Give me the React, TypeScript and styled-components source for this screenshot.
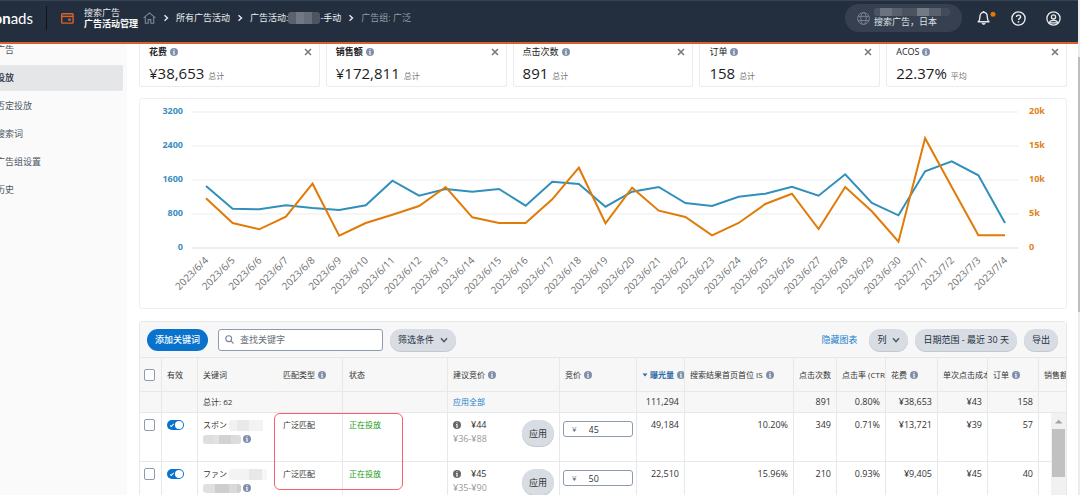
import React from "react";
import styled, { createGlobalStyle, css } from "styled-components";

const GlobalStyle = createGlobalStyle`
  *, *::before, *::after { box-sizing: border-box; }
  html, body { margin: 0; background: #fff; overflow: hidden; }
  body, button, input {
    font-family: "Open Sans", "Noto Sans CJK SC", "Noto Sans CJK JP", sans-serif;
    font-size: 9px;
    color: #333;
  }
  button { border: 0; padding: 0; background: none; cursor: pointer; white-space: nowrap; }
  a { text-decoration: none; color: inherit; }
  svg { display: block; flex: none; }
`;

/* ---------- page frame ---------- */

const Shell = styled.div`
  display: flex;
  height: 100vh;
  overflow: hidden;
`;

const Page = styled.div`
  flex: 1;
  min-width: 0;
  display: flex;
  flex-direction: column;
`;

const PageScroll = styled.div`
  width: 2px;
  padding-top: 57px;
  background: #ececec;
`;

const PageThumb = styled.div`
  height: 255px;
  background: #bdbdbd;
`;

const Columns = styled.div`
  flex: 1;
  display: flex;
  min-height: 0;
`;

/* ---------- header ---------- */

const Header = styled.header`
  position: relative;
  z-index: 1;
  display: flex;
  align-items: flex-start;
  height: 44px;
  background: #232f3e;
  border-top: 1px solid #364352;
  border-bottom: 2px solid #d8602c;
  color: #fff;
`;

const HeaderGroup = styled.div`
  display: flex;
  align-items: center;
  height: 34px;
`;

const Logo = styled.a`
  display: flex;
  justify-content: flex-end;
  width: 33px;
  font: 15px/20px Lato, "Open Sans", sans-serif;
  b { font-weight: 700; }
`;

const Divider = styled.span`
  width: 1px;
  height: 24px;
  margin: 0 14px 0 13px;
  background: #0d131b;
`;

const Product = styled.div`
  display: flex;
  flex-direction: column;
  margin-left: 10px;
  line-height: 11px;
  white-space: nowrap;
  color: #e6e8eb;
  strong { color: #fff; }
`;

const Crumbs = styled.nav`
  display: flex;
  align-items: center;
  gap: 7px;
  margin-left: 5px;
  line-height: 12px;
  white-space: nowrap;
`;

const Crumb = styled.a`
  display: flex;
  align-items: center;
  color: #eef0f2;
`;

const CurrentCrumb = styled.span`
  color: #939ca8;
`;

const HeaderTools = styled(HeaderGroup)`
  margin-left: auto;
  padding-right: 17px;
`;

const AccountPill = styled.button`
  display: flex;
  align-items: center;
  gap: 4px;
  height: 28px;
  width: 117px;
  padding-left: 12px;
  margin-right: 15px;
  border-radius: 14px;
  background: #364050;
  color: #dfe2e6;
`;

const AccountText = styled.span`
  display: flex;
  flex-direction: column;
  line-height: 12px;
  text-align: left;
`;

const IconButton = styled.button<{ $gap?: number }>`
  margin-right: ${(p) => p.$gap ?? 0}px;
`;

/* ---------- side navigation ---------- */

const Side = styled.nav`
  width: 127px;
  flex: none;
  background: #fafafa;
`;

const SideList = styled.ul`
  list-style: none;
  display: flex;
  flex-direction: column;
  gap: 2px;
  margin: -7px 4px 0 0;
  padding: 0;
`;

const SideLink = styled.a<{ $active?: boolean }>`
  display: block;
  height: 26px;
  line-height: 26px;
  text-indent: -4px;
  border-radius: 0 2px 2px 0;
  color: ${(p) => (p.$active ? "#232f3e" : "#4b5563")};
  font-weight: ${(p) => (p.$active ? 500 : 400)};
  background: ${(p) => (p.$active ? "#e4e6e8" : "transparent")};
`;

/* ---------- metrics ---------- */

const Main = styled.main`
  flex: 1;
  min-width: 0;
  padding: 0 11px 0 12px;
`;

const Metrics = styled.section`
  display: grid;
  grid-template-columns: repeat(5, 1fr);
  gap: 6px;
`;

const Metric = styled.article`
  display: flex;
  flex-direction: column;
  gap: 5px;
  padding: 2px 7px 3px 9px;
  border: 1px solid #ececee;
  border-top: 0;
  border-radius: 0 0 3px 3px;
`;

const MetricTitle = styled.div<{ $strong?: boolean }>`
  display: flex;
  align-items: center;
  gap: 3px;
  height: 12px;
  line-height: 12px;
  font-weight: ${(p) => (p.$strong ? 700 : 400)};
  color: #222;
  button { margin-left: auto; }
`;

const MetricValue = styled.div`
  display: flex;
  align-items: baseline;
  gap: 4px;
  font-size: 15px;
  line-height: 20px;
  height: 20px;
  color: #1c1c1c;
  small { font-size: 8px; color: #767676; }
`;

const ChartCard = styled.section`
  margin-top: 11px;
  border: 1px solid #efeff0;
  border-radius: 3px;
  svg { width: 100%; height: auto; }
`;

/* ---------- keyword table ---------- */

const Panel = styled.section`
  margin-top: 12px;
  border: 1px solid #e8e8e9;
  border-radius: 3px 3px 0 0;
`;

const Toolbar = styled.div`
  display: flex;
  align-items: center;
  height: 36px;
  padding: 0 8px 0 7px;
  background: #f7f7f7;
  border-bottom: 1px solid #e8e8e9;
`;

const ToolGroup = styled.div<{ $end?: boolean }>`
  display: flex;
  align-items: center;
  gap: 7px;
  margin-left: ${(p) => (p.$end ? "auto" : "0")};
`;

const Pill = styled.button<{ $primary?: boolean }>`
  display: flex;
  align-items: center;
  gap: 6px;
  height: 22px;
  padding: 0 8px;
  border-radius: 11px;
  color: #232f3e;
  background: #d8dde4;
  box-shadow: 0 1px 0 #c3c8d0;
  ${(p) =>
    p.$primary &&
    css`
      color: #fff;
      background: #0972cc;
      box-shadow: none;
      font-weight: 500;
      margin-right: 3px;
    `}
`;

const SearchBox = styled.label`
  display: flex;
  align-items: center;
  gap: 6px;
  width: 165px;
  height: 22px;
  padding: 0 6px;
  border: 1px solid #8c9bb0;
  border-radius: 3px;
  background: #fff;
  input {
    flex: 1;
    min-width: 0;
    border: 0;
    padding: 0;
    outline: 0;
    background: none;
  }
  input::placeholder { color: #666f7c; opacity: 1; }
`;

const TextLink = styled.a`
  color: #1a80cc;
  margin-right: 5px;
`;

const TableFrame = styled.div`
  position: relative;
`;

const Table = styled.table`
  width: 100%;
  table-layout: fixed;
  border-collapse: separate;
  border-spacing: 0;
  font-size: 8px;
  line-height: 14px;
`;

const cell = css<{ $num?: boolean; $open?: boolean; $pad?: string }>`
  padding: ${(p) => p.$pad ?? "0 5px"};
  border-right: 1px solid ${(p) => (p.$open ? "transparent" : "#e8e8e9")};
  border-bottom: 1px solid #e8e8e9;
  text-align: ${(p) => (p.$num ? "right" : "left")};
  font-size: ${(p) => (p.$num ? 9 : 8)}px;
  white-space: nowrap;
  overflow: hidden;
  &:last-child { border-right: 0; }
`;

const Th = styled.th`
  ${cell}
  height: 34px;
  padding-right: 0;
  background: #f7f7f7;
  font-weight: 400;
`;

const ThLabel = styled.span`
  display: flex;
  align-items: center;
  gap: 3px;
`;

const SortButton = styled.button`
  display: flex;
  align-items: center;
  gap: 2px;
  font-size: 8px;
  font-weight: 700;
  color: #2f6ba8;
`;

const TotalCell = styled.td`
  ${cell}
  height: 21px;
  background: #f7f7f7;
`;

const Td = styled.td`
  ${cell}
  height: 49px;
  padding-top: 5px;
  vertical-align: top;
`;

const TickBox = styled.input`
  appearance: none;
  display: block;
  width: 11px;
  height: 12px;
  margin: 1px 0 0;
  border: 1px solid #8c9bb0;
  border-radius: 2px;
  background: #fff;
`;

const Switch = styled.input`
  appearance: none;
  display: flex;
  align-items: center;
  justify-content: space-between;
  width: 17px;
  height: 10px;
  margin: 2px 0 0;
  padding: 0 1px 0 3px;
  border-radius: 5px;
  background: #0972cc;
  &::before {
    content: "";
    width: 4px;
    height: 2px;
    border: solid #fff;
    border-width: 0 0 1px 1px;
    transform: rotate(-45deg);
  }
  &::after {
    content: "";
    width: 8px;
    height: 8px;
    border-radius: 50%;
    background: #fff;
  }
`;

const Line = styled.div`
  display: flex;
  align-items: center;
  height: 14px;
  gap: 2px;
`;

const Status = styled.span`
  color: #129a12;
`;

const Suggest = styled.div`
  display: flex;
  justify-content: space-between;
  align-items: flex-start;
  font-size: 9px;
`;

const SuggestBid = styled(Line)`
  gap: 10px;
`;

const Range = styled.div`
  color: #999;
`;

const ApplyButton = styled.button`
  width: 32px;
  height: 26px;
  margin-top: 2px;
  border-radius: 13px;
  background: #d8dde4;
  box-shadow: 0 1px 0 #c3c8d0;
`;

const BidBox = styled.label`
  display: flex;
  align-items: center;
  gap: 12px;
  height: 16px;
  margin-top: 3px;
  padding: 0 8px;
  border: 1px solid #8c9bb0;
  border-radius: 3px;
  color: #4f5866;
  input {
    flex: 1;
    min-width: 0;
    height: 14px;
    padding: 0;
    border: 0;
    outline: 0;
    background: none;
  }
`;

const TableScroll = styled.div`
  position: absolute;
  top: 55px;
  right: 0;
  bottom: 0;
  width: 15px;
  display: flex;
  flex-direction: column;
  align-items: center;
  background: #f1f1f1;
`;

const ScrollThumb = styled.div`
  width: 13px;
  height: 48px;
  background: #c1c1c1;
`;

const Highlight = styled.div`
  position: absolute;
  top: 55px;
  left: 134px;
  width: 129px;
  height: 77px;
  border: 1px solid #f9606a;
  border-radius: 6px;
  pointer-events: none;
`;

/* ---------- icons ---------- */

const Info = ({ color = "#8090ab" }: { color?: string }) => (
  <svg width="8" height="8" viewBox="0 0 8 8" aria-hidden="true">
    <circle cx="4" cy="4" r="4" fill={color} />
    <path d="M3.500 1.200h1v1h-1zM3 3h1.500v2.700H5v.8H3v-.8h.5V3.800H3z" fill="#fff" />
  </svg>
);

const Chevron = ({ dir = "right", color = "#e8eaed" }: { dir?: "right" | "down"; color?: string }) => (
  <svg width={dir === "right" ? 6 : 8} height="8" viewBox={dir === "right" ? "0 0 6 8" : "0 0 8 8"} aria-hidden="true">
    <path d={dir === "right" ? "M1.5 1.2 4.5 4 1.5 6.8" : "M1 2.2 4 5.6 7 2.2"} fill="none" stroke={color} strokeWidth="1.4" />
  </svg>
);

const Close = () => (
  <svg width="8" height="8" viewBox="0 0 8 8" aria-hidden="true">
    <path d="M1 1 7 7M7 1 1 7" stroke="#777" strokeWidth="1.5" />
  </svg>
);

const CampaignIcon = () => (
  <svg width="13" height="11" viewBox="0 0 13 11" aria-hidden="true">
    <rect x="0.7" y="0.7" width="11.4" height="9.4" rx="0.8" fill="none" stroke="#d9622b" strokeWidth="1.4" />
    <path d="M0.7 3.4h11.4" stroke="#d9622b" strokeWidth="1.5" />
    <rect x="7.2" y="5.6" width="2.6" height="2.2" fill="#d9622b" />
  </svg>
);

const HomeIcon = () => (
  <svg width="13" height="12" viewBox="0 0 13 12" fill="none" stroke="#7d8794" strokeWidth="1.1" aria-hidden="true">
    <path d="M0.6 5.8 6.5 0.9l5.9 4.9M2.3 4.8v6.5h2.9V7.6h2.6v3.7h2.9V4.8" />
  </svg>
);

const GlobeIcon = () => (
  <svg width="13" height="13" viewBox="0 0 13 13" fill="none" stroke="#778190" aria-hidden="true">
    <circle cx="6.5" cy="6.5" r="5.9" />
    <ellipse cx="6.5" cy="6.5" rx="2.7" ry="5.9" />
    <path d="M1 4.4h11M1 8.6h11" />
  </svg>
);

const BellIcon = () => (
  <svg width="20" height="16" viewBox="0 0 20 16" fill="none" stroke="#e8eaed" aria-hidden="true">
    <path d="M1.2 11.8c1.5-1.3 1.7-2.7 1.7-4.9 0-2.8 1.4-4.5 3.7-4.5s3.7 1.7 3.7 4.5c0 2.2.2 3.6 1.7 4.9z" strokeWidth="1.4" strokeLinejoin="round" />
    <path d="M6.6 2.4V1" strokeWidth="1.6" />
    <path d="M4.9 13.2c.3 1.7 3.1 1.7 3.4 0z" fill="#e8eaed" strokeWidth=".6" />
    <circle cx="16" cy="4.3" r="2.5" fill="#e77600" stroke="none" />
  </svg>
);

const HelpIcon = () => (
  <svg width="15" height="15" viewBox="0 0 15 15" fill="none" stroke="#e8eaed" aria-hidden="true">
    <circle cx="7.5" cy="7.5" r="6.6" strokeWidth="1.4" />
    <path d="M5.5 6c0-2.6 4.1-2.5 4.1 0 0 1.4-2 1.4-2 2.9" strokeWidth="1.4" />
    <circle cx="7.5" cy="10.8" r=".9" fill="#e8eaed" stroke="none" />
  </svg>
);

const UserIcon = () => (
  <svg width="15" height="15" viewBox="0 0 15 15" fill="none" stroke="#e8eaed" strokeWidth="1.3" aria-hidden="true">
    <circle cx="7.5" cy="7.5" r="6.6" />
    <circle cx="7.5" cy="5.9" r="2.1" />
    <path d="M3.4 11.8c.3-3.3 7.9-3.3 8.2 0z" />
  </svg>
);

const SearchIcon = () => (
  <svg width="9" height="9" viewBox="0 0 9 9" fill="none" stroke="#7a8494" strokeWidth="1.1" aria-hidden="true">
    <circle cx="3.7" cy="3.7" r="2.9" />
    <path d="M5.9 5.9 8.5 8.5" />
  </svg>
);

const SortArrow = () => (
  <svg width="6" height="4" viewBox="0 0 6 4" aria-hidden="true">
    <path d="M0.5 0.5h5L3 3.5z" fill="#2f6ba8" />
  </svg>
);

const ScrollArrow = () => (
  <svg width="15" height="16" viewBox="0 0 15 16" aria-hidden="true">
    <path d="M4 10.5h7.5L7.7 6.8z" fill="#a3a3a3" />
  </svg>
);

/* Redacted names, drawn as strips of flat blocks. */
const Redaction = ({ width, height, blocks }: { width: number; height: number; blocks: [number, string][] }) => {
  const id = React.useId();
  let x = 0;
  return (
    <svg width={width} height={height} viewBox={`0 0 ${width} ${height}`} aria-hidden="true">
      <clipPath id={id}>
        <rect width={width} height={height} rx="3" />
      </clipPath>
      <g clipPath={`url(#${id})`}>
        {blocks.map(([w, fill], i) => {
          const rect = <rect key={i} x={x} width={w} height={height} fill={fill} />;
          x += w;
          return rect;
        })}
      </g>
    </svg>
  );
};

/* ---------- chart ---------- */

const DATES = [
  ...Array.from({ length: 27 }, (_, i) => `2023/6/${i + 4}`),
  ...Array.from({ length: 4 }, (_, i) => `2023/7/${i + 1}`),
];

const SPEND = [
  1459, 925, 911, 1005, 941, 894, 1005, 1584, 1231, 1388, 1325, 1388, 995, 1560, 1506, 972, 1325, 1435, 1059, 988,
  1207, 1278, 1442, 1231, 1734, 1059, 769, 1805, 2040, 1711, 588,
];

const SALES = [
  7309, 3676, 2750, 4603, 9456, 1809, 3676, 4897, 6177, 8971, 4515, 3676, 3676, 7162, 11809, 3632, 8868, 5485, 4559,
  1868, 3676, 6471, 7985, 2794, 8971, 5397, 926, 16132, 8971, 1868, 1868,
];

const PLOT = { left: 52, right: 878, top: 13, bottom: 149, first: 66, last: 865 };

const px = (i: number) => PLOT.first + ((PLOT.last - PLOT.first) * i) / (DATES.length - 1);
const py = (v: number, max: number) => PLOT.bottom - ((PLOT.bottom - PLOT.top) * v) / max;
const line = (data: number[], max: number) => data.map((v, i) => `${px(i)},${py(v, max)}`).join(" ");

const ChartText = styled.text<{ $tone: string; $bold?: boolean }>`
  fill: ${(p) => p.$tone};
  font-size: ${(p) => (p.$bold ? 9 : 10)}px;
  font-weight: ${(p) => (p.$bold ? 700 : 400)};
`;

const Chart = () => (
  <svg viewBox="0 0 926 209" role="img" aria-label="花费与销售额趋势">
    {[0, 1, 2, 3, 4].map((n) => {
      const y = PLOT.top + 34 * n;
      return (
        <g key={n}>
          <line x1={PLOT.left} x2={PLOT.right} y1={y} y2={y} stroke={n === 4 ? "#d5dbe3" : "#ededee"} />
          <ChartText x="43" y={y + 2} textAnchor="end" $tone="#3a8fbd" $bold>
            {3200 - 800 * n}
          </ChartText>
          <ChartText x="889" y={y + 2} $tone="#e08218" $bold>
            {n === 4 ? "0" : `${20 - 5 * n}k`}
          </ChartText>
        </g>
      );
    })}
    <polyline points={line(SPEND, 3200)} fill="none" stroke="#318fbc" strokeWidth="2" />
    <polyline points={line(SALES, 20000)} fill="none" stroke="#e07b08" strokeWidth="2" />
    {DATES.map((d, i) => (
      <ChartText key={d} transform={`translate(${px(i) + 3} 162) rotate(-45)`} textAnchor="end" $tone="#6f6f6f">
        {d}
      </ChartText>
    ))}
  </svg>
);

/* ---------- data ---------- */

const NAV = ["广告", "投放", "否定投放", "搜索词", "广告组设置", "历史"];

const METRICS = [
  { title: "花费", value: "¥38,653", note: "总计", strong: true },
  { title: "销售额", value: "¥172,811", note: "总计", strong: true },
  { title: "点击次数", value: "891", note: "总计" },
  { title: "订单", value: "158", note: "总计" },
  { title: "ACOS", value: "22.37%", note: "平均" },
];

const COLUMN_WIDTHS = [22, 36, 80, 65, 105, 112, 77, 48, 109, 43, 49, 52, 50, 51];

const TOTALS = ["111,294", "", "891", "0.80%", "¥38,653", "¥43", "158"];

const ROWS = [
  {
    keyword: "スポン",
    bid: "¥44",
    range: "¥36-¥88",
    value: "45",
    figures: ["49,184", "10.20%", "349", "0.71%", "¥13,721", "¥39", "57"],
    nameBlocks: [[8, "#f1f1f1"], [12, "#e9e9e9"], [14, "#f3f3f3"]] as [number, string][],
    lineBlocks: [[10, "#dedede"], [6, "#e2e2e2"], [12, "#d2d2d2"], [10, "#dcdcdc"]] as [number, string][],
  },
  {
    keyword: "ファン",
    bid: "¥45",
    range: "¥35-¥90",
    value: "50",
    figures: ["22,510", "15.96%", "210", "0.93%", "¥9,405", "¥45", "40"],
    nameBlocks: [[20, "#f3f3f3"], [13, "#e8e8e8"], [7, "#f6f6f6"]] as [number, string][],
    lineBlocks: [[12, "#e0e0e0"], [14, "#cecece"], [8, "#d9d9d9"], [4, "#cfcfcf"]] as [number, string][],
  },
];

/* ---------- page ---------- */

export default function App() {
  return (
    <>
      <GlobalStyle />
      <Shell>
        <Page>
          <Header>
            <HeaderGroup>
              <Logo href="#">
                <b>on</b>ads
              </Logo>
              <Divider />
              <CampaignIcon />
              <Product>
                <span>搜索广告</span>
                <strong>广告活动管理</strong>
              </Product>
              <Crumbs aria-label="导航路径">
                <Crumb href="#" aria-label="主页">
                  <HomeIcon />
                </Crumb>
                <Chevron />
                <Crumb href="#">所有广告活动</Crumb>
                <Chevron />
                <Crumb href="#">
                  广告活动:
                  <Redaction width={32} height={12} blocks={[[8, "#59626e"], [8, "#727983"], [8, "#666e79"], [8, "#4c5561"]]} />
                  -手动
                </Crumb>
                <Chevron />
                <CurrentCrumb>广告组: 广泛</CurrentCrumb>
              </Crumbs>
            </HeaderGroup>
            <HeaderTools>
              <AccountPill>
                <GlobeIcon />
                <AccountText>
                  <Redaction
                    width={76}
                    height={8}
                    blocks={[[6, "#4a5361"], [12, "#6b737e"], [10, "#58616d"], [15, "#4a5361"], [12, "#727a84"], [12, "#59616d"], [9, "#424b5a"]]}
                  />
                  <span>搜索广告，日本</span>
                </AccountText>
              </AccountPill>
              <IconButton $gap={14} aria-label="通知">
                <BellIcon />
              </IconButton>
              <IconButton $gap={20} aria-label="帮助">
                <HelpIcon />
              </IconButton>
              <IconButton aria-label="账户">
                <UserIcon />
              </IconButton>
            </HeaderTools>
          </Header>

          <Columns>
            <Side>
              <SideList>
                {NAV.map((item) => (
                  <li key={item}>
                    <SideLink href="#" $active={item === "投放"}>
                      {item}
                    </SideLink>
                  </li>
                ))}
              </SideList>
            </Side>

            <Main>
              <Metrics>
                {METRICS.map((m) => (
                  <Metric key={m.title}>
                    <MetricTitle $strong={m.strong}>
                      {m.title}
                      <Info />
                      <button aria-label={`移除${m.title}`}>
                        <Close />
                      </button>
                    </MetricTitle>
                    <MetricValue>
                      {m.value}
                      <small>{m.note}</small>
                    </MetricValue>
                  </Metric>
                ))}
              </Metrics>

              <ChartCard>
                <Chart />
              </ChartCard>

              <Panel>
                <Toolbar>
                  <ToolGroup>
                    <Pill $primary>添加关键词</Pill>
                    <SearchBox>
                      <SearchIcon />
                      <input type="search" placeholder="查找关键字" aria-label="查找关键字" />
                    </SearchBox>
                    <Pill>
                      筛选条件 <Chevron dir="down" color="#4a5565" />
                    </Pill>
                  </ToolGroup>
                  <ToolGroup $end>
                    <TextLink href="#">隐藏图表</TextLink>
                    <Pill>
                      列 <Chevron dir="down" color="#4a5565" />
                    </Pill>
                    <Pill>日期范围 - 最近 30 天</Pill>
                    <Pill>导出</Pill>
                  </ToolGroup>
                </Toolbar>

                <TableFrame>
                  <Table>
                    <colgroup>
                      {COLUMN_WIDTHS.map((w, i) => (
                        <col key={i} width={w} />
                      ))}
                      <col />
                    </colgroup>
                    <thead>
                      <tr>
                        <Th $pad="0 0 0 4px">
                          <TickBox type="checkbox" aria-label="全选" />
                        </Th>
                        <Th>有效</Th>
                        <Th $open>关键词</Th>
                        <Th>
                          <ThLabel>匹配类型 <Info /></ThLabel>
                        </Th>
                        <Th $pad="0 0 0 6px">状态</Th>
                        <Th>
                          <ThLabel>建议竞价 <Info /></ThLabel>
                        </Th>
                        <Th>
                          <ThLabel>竞价 <Info /></ThLabel>
                        </Th>
                        <Th>
                          <ThLabel>
                            <SortButton><SortArrow />曝光量</SortButton> <Info />
                          </ThLabel>
                        </Th>
                        <Th>
                          <ThLabel>搜索结果首页首位 IS <Info /></ThLabel>
                        </Th>
                        <Th>点击次数</Th>
                        <Th>点击率 (CTR)</Th>
                        <Th>
                          <ThLabel>花费 <Info /></ThLabel>
                        </Th>
                        <Th>单次点击成本</Th>
                        <Th>
                          <ThLabel>订单 <Info /></ThLabel>
                        </Th>
                        <Th>销售额</Th>
                      </tr>
                    </thead>
                    <tbody>
                      <tr>
                        <TotalCell />
                        <TotalCell />
                        <TotalCell $open>总计: 62</TotalCell>
                        <TotalCell />
                        <TotalCell />
                        <TotalCell>
                          <TextLink href="#">应用全部</TextLink>
                        </TotalCell>
                        <TotalCell />
                        {TOTALS.map((t, i) => (
                          <TotalCell key={i} $num>
                            {t}
                          </TotalCell>
                        ))}
                        <TotalCell />
                      </tr>
                      {ROWS.map((r) => (
                        <tr key={r.keyword}>
                          <Td $pad="0 0 0 4px">
                            <TickBox type="checkbox" aria-label={`选择 ${r.keyword}`} />
                          </Td>
                          <Td>
                            <Switch type="checkbox" role="switch" defaultChecked aria-label={`启用 ${r.keyword}`} />
                          </Td>
                          <Td $open>
                            <Line>
                              {r.keyword}
                              <Redaction width={38} height={11} blocks={r.nameBlocks} />
                            </Line>
                            <Line>
                              <Redaction width={38} height={9} blocks={r.lineBlocks} />
                              <Info />
                            </Line>
                          </Td>
                          <Td>广泛匹配</Td>
                          <Td $pad="0 0 0 6px">
                            <Status>正在投放</Status>
                          </Td>
                          <Td>
                            <Suggest>
                              <div>
                                <SuggestBid>
                                  <Info color="#666" />
                                  {r.bid}
                                </SuggestBid>
                                <Range>{r.range}</Range>
                              </div>
                              <ApplyButton>应用</ApplyButton>
                            </Suggest>
                          </Td>
                          <Td $pad="0 3px">
                            <BidBox>
                              ¥
                              <input type="text" defaultValue={r.value} aria-label={`${r.keyword} 竞价`} />
                            </BidBox>
                          </Td>
                          {r.figures.map((f, i) => (
                            <Td key={i} $num>
                              {f}
                            </Td>
                          ))}
                          <Td />
                        </tr>
                      ))}
                    </tbody>
                  </Table>
                  <Highlight />
                  <TableScroll>
                    <ScrollArrow />
                    <ScrollThumb />
                  </TableScroll>
                </TableFrame>
              </Panel>
            </Main>
          </Columns>
        </Page>
        <PageScroll>
          <PageThumb />
        </PageScroll>
      </Shell>
    </>
  );
}
